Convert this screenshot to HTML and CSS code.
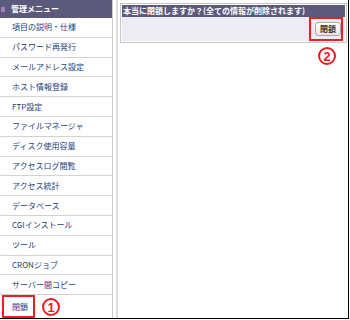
FILE: index.html
```html
<!DOCTYPE html>
<html lang="ja">
<head>
<meta charset="utf-8">
<title>管理メニュー</title>
<link rel="stylesheet" href="styles.css">
</head>
<body>
<div class="screen">
  <nav class="menu">
    <div class="menu-title"><span class="bullet"></span>管理メニュー</div>
    <ul class="menu-list">
      <li>項目の説明・仕様</li>
      <li>パスワード再発行</li>
      <li>メールアドレス設定</li>
      <li>ホスト情報登録</li>
      <li>FTP設定</li>
      <li>ファイルマネージャ</li>
      <li>ディスク使用容量</li>
      <li>アクセスログ閲覧</li>
      <li>アクセス統計</li>
      <li>データベース</li>
      <li>CGIインストール</li>
      <li>ツール</li>
      <li>CRONジョブ</li>
      <li>サーバー間コピー</li>
      <li>閉鎖</li>
    </ul>
  </nav>
  <div class="divider"></div>
  <main class="content">
    <div class="panel">
      <div class="panel-head">本当に閉鎖しますか？(全ての情報が削除されます)</div>
      <div class="panel-body"><button class="btn" type="button">閉鎖</button></div>
    </div>
  </main>
  <span class="hl hl-menu"></span>
  <span class="hl hl-btn"></span>
  <span class="num num-1">1</span>
  <span class="num num-2">2</span>
</div>
</body>
</html>
```
FILE: styles.css
```css
html, body {
  margin: 0;
  padding: 0;
  background: #fff;
}

.screen {
  position: relative;
  display: flex;
  width: 348px;
  height: 318px;
  border-right: 1px solid #000;
  border-bottom: 1px solid #000;
  font-family: "Noto Sans CJK JP", "Noto Sans", sans-serif;
  font-size: 8px;
  line-height: 1;
}

.menu {
  width: 112px;
  border-right: 1px solid #c9c9c9;
  display: flex;
  flex-direction: column;
}

.menu-title {
  height: 18px;
  flex: none;
  background: #5b5a7d;
  color: #fff;
  font-weight: bold;
  display: flex;
  align-items: center;
  padding-left: 1px;
}

.bullet {
  width: 4px;
  height: 5px;
  background: #a47fc4;
  margin-right: 6px;
}

.menu-list {
  list-style: none;
  margin: 0;
  padding: 0;
  flex: 1;
  display: flex;
  flex-direction: column;
}

.menu-list li {
  height: 18.8px;
  flex: none;
  border-bottom: 1px solid #d3d3d3;
  padding-left: 12px;
  display: flex;
  align-items: center;
  color: #22427a;
}

.menu-list li:last-child {
  flex: 1;
  border-bottom: none;
}

.divider {
  width: 2px;
  margin: 0 2px 0 3px;
  background: #dcdcdc;
}

.content {
  flex: 1;
  padding: 3px 1px 0 0;
}

.panel {
  border: 1px solid #c6c6c6;
  padding: 1px;
  display: flex;
  flex-direction: column;
}

.panel-head {
  height: 12px;
  background: #5b5a7d;
  color: #fff;
  font-weight: bold;
  display: flex;
  align-items: center;
  padding-left: 1px;
}

.panel-body {
  height: 24px;
  background: #ececf5;
  display: flex;
  justify-content: flex-end;
  align-items: center;
  padding-right: 4px;
}

.btn {
  font-family: inherit;
  font-size: 8px;
  font-weight: bold;
  line-height: 1;
  color: #333;
  height: 14px;
  padding: 0 4px;
  margin: 0;
  border: 1px solid #a9a9a9;
  border-radius: 3px;
  background: linear-gradient(#ffffff, #e6e6e6);
}

.hl {
  position: absolute;
  box-sizing: border-box;
  border: 2px solid #ee1c25;
}

.hl-menu {
  left: 2px;
  top: 295px;
  width: 33px;
  height: 23px;
}

.hl-btn {
  left: 309px;
  top: 17px;
  width: 34px;
  height: 24px;
}

.num {
  position: absolute;
  box-sizing: border-box;
  width: 18px;
  height: 18px;
  border: 2px solid #ee1c25;
  border-radius: 50%;
  color: #ee1c25;
  font-family: "Liberation Sans", sans-serif;
  font-weight: bold;
  font-size: 13px;
  display: flex;
  align-items: center;
  justify-content: center;
}

.num-1 {
  left: 42px;
  top: 298px;
}

.num-2 {
  left: 318px;
  top: 47px;
}
```
